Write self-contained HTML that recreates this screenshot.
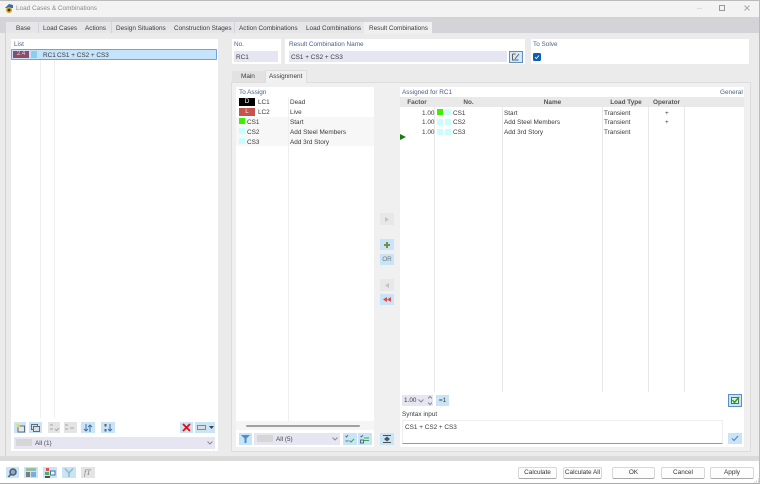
<!DOCTYPE html>
<html><head><meta charset="utf-8"><style>
html,body{margin:0;padding:0;width:760px;height:484px;overflow:hidden;background:#fff}
body{position:relative;font-family:"Liberation Sans",sans-serif;font-size:6.4px;color:#3a3a3a}
div{position:absolute;box-sizing:border-box}
.t{white-space:nowrap;line-height:9px;height:9px}
.b{color:#4a5f8a}
.w{background:#fff}
.i{background:#c9e3f7}
.g{background:#e4e4e4}
.f{background:#e6e6f2}
.v{width:1px;background:#efefef}
.btn{background:#fdfdfd;border:1px solid #d8d8d8;border-bottom:1px solid #aaa;border-radius:2px;height:12px;top:467px;text-align:center;line-height:10px;color:#333;white-space:nowrap}
.hd{top:97.500px;height:9px;text-align:center;line-height:9px;font-weight:bold;color:#555;white-space:nowrap}
svg{position:absolute;opacity:.82}
</style></head><body>
<div style="left:0;top:0;width:760px;height:17px;background:#f3f3f3;border-top:1px solid #bbb"></div>
<div style="left:0;top:17px;width:760px;height:16px;background:#d4d4d8"></div>
<div style="left:0;top:33px;width:760px;height:428px;background:#ebebeb"></div>
<div style="left:0;top:456px;width:760px;height:5px;background:#dadada"></div>
<div style="left:0;top:461px;width:760px;height:22px;background:#fff"></div>
<div style="left:0;top:483px;width:760px;height:1px;background:#aaa"></div>
<div style="left:759px;top:0;width:1px;height:484px;background:#bbb"></div>
<div style="left:5px;top:33px;width:1px;height:423px;background:#d2d2d2"></div>

<svg style="left:4px;top:3px;opacity:1" width="11" height="11" viewBox="0 0 11 11"><path d="M1 5 L5 1 L9 2 L9 5 Z" fill="#3a6ea5"/><circle cx="5" cy="7" r="3" fill="#d9a520"/><circle cx="5" cy="7" r="1.400" fill="#333"/></svg>
<div class="t" style="left:16px;top:4px;color:#8a8a8a">Load Cases &amp; Combinations</div>
<div style="left:697px;top:8px;width:5px;height:1px;background:#ddd"></div>
<div style="left:719px;top:5px;width:6px;height:6px;border:1px solid #999"></div>
<svg style="left:744px;top:5px" width="6" height="6"><path d="M.5 .5L5.500 5.500M5.500 .5L.5 5.500" stroke="#999" fill="none"/></svg>

<div style="left:6px;top:22px;width:32px;height:11px;background:#e6e6e8"></div>
<div style="left:38.500px;top:22px;width:40px;height:11px;background:#e6e6e8"></div>
<div style="left:79px;top:22px;width:32px;height:11px;background:#e6e6e8"></div>
<div style="left:111.500px;top:22px;width:58px;height:11px;background:#e6e6e8"></div>
<div style="left:170px;top:22px;width:64px;height:11px;background:#e6e6e8"></div>
<div style="left:234.500px;top:22px;width:67px;height:11px;background:#e6e6e8"></div>
<div style="left:302px;top:22px;width:62px;height:11px;background:#e6e6e8"></div>
<div style="left:364px;top:22px;width:68px;height:12px;background:#f0f0f0"></div>
<div class="t" style="left:16px;top:24px">Base</div>
<div class="t" style="left:43px;top:24px">Load Cases</div>
<div class="t" style="left:85px;top:24px">Actions</div>
<div class="t" style="left:116px;top:24px">Design Situations</div>
<div class="t" style="left:174px;top:24px">Construction Stages</div>
<div class="t" style="left:239px;top:24px">Action Combinations</div>
<div class="t" style="left:306px;top:24px">Load Combinations</div>
<div class="t" style="left:369px;top:24px">Result Combinations</div>

<!-- list -->
<div class="w" style="left:11px;top:39px;width:207px;height:412px"></div>
<div class="t b" style="left:14px;top:40px">List</div>
<div class="v" style="left:40px;top:49px;height:369px"></div>
<div class="v" style="left:54px;top:49px;height:369px"></div>
<div style="left:11px;top:49px;width:206px;height:11px;background:#c5e3fa;border:1px solid #6fa4d8;border-radius:1px"></div>
<div style="left:13px;top:51px;width:16px;height:7px;background:#8e4a68;color:#ddd;font-size:6px;line-height:7px;text-align:center">2.4</div>
<div style="left:31px;top:51px;width:6px;height:7px;background:#88d0ee"></div>
<div class="t" style="left:43px;top:50.500px">RC1</div>
<div class="t" style="left:57px;top:50.500px">CS1 + CS2 + CS3</div>

<div class="i" style="left:14px;top:422px;width:12px;height:11px"></div>
<svg style="left:15px;top:423px" width="11" height="10"><rect x="3" y="3" width="6.500" height="6" fill="#e8e8e8" stroke="#456" stroke-width="1"/><circle cx="3" cy="2.500" r="1.800" fill="#f2d840"/></svg>
<div class="i" style="left:29px;top:422px;width:13px;height:11px"></div>
<svg style="left:30px;top:423px" width="11" height="10"><rect x="1.500" y="1.500" width="6" height="5" fill="#ddd" stroke="#456"/><rect x="3.500" y="3.500" width="6" height="5" fill="#ddd" stroke="#456"/></svg>
<div class="g" style="left:48px;top:422px;width:12px;height:11px"></div>
<div class="g" style="left:64px;top:422px;width:13px;height:11px"></div>
<svg style="left:49px;top:423px" width="28" height="10"><path d="M1 2h3M1 6h3M6 6l1.500 1.500L10 5M16 2h3M16 6h3M21 5h4" stroke="#999" fill="none"/></svg>
<div class="i" style="left:81px;top:422px;width:14px;height:11px"></div>
<svg style="left:83px;top:423px" width="10" height="10"><path d="M3 1v7M1 6l2 2 2-2M7 9V2M5 4l2-2 2 2" stroke="#25598f" fill="none"/></svg>
<div class="i" style="left:101px;top:422px;width:14px;height:11px"></div>
<svg style="left:103px;top:423px" width="10" height="10"><path d="M7 1v7M5 6l2 2 2-2" stroke="#25598f" fill="none"/><rect x="1.500" y="1" width="2" height="2.500" fill="#444"/><rect x="1.500" y="6" width="2" height="2.500" fill="#25598f"/></svg>
<div class="i" style="left:180px;top:422px;width:13px;height:11px"></div>
<svg style="left:182px;top:423px;opacity:1" width="9" height="9"><path d="M1 1L8 8M8 1L1 8" stroke="#e01010" stroke-width="1.800"/></svg>
<div class="i" style="left:195px;top:422px;width:20px;height:11px"></div>
<div style="left:197px;top:425px;width:9px;height:5px;background:#ddd;border:1px solid #888"></div>
<svg style="left:209px;top:426px" width="5" height="3"><path d="M0 0H5L2.500 3Z" fill="#222"/></svg>
<div class="f" style="left:14px;top:437px;width:201px;height:12px"></div>
<div style="left:16px;top:439px;width:16px;height:7px;background:#d6d6d6"></div>
<div class="t" style="left:35px;top:439px;color:#444">All (1)</div>
<svg style="left:207px;top:441px" width="6" height="4"><path d="M.5 .5L3 3 5.500 .5" stroke="#777" fill="none"/></svg>

<!-- top boxes -->
<div class="w" style="left:232px;top:39px;width:49px;height:25px"></div>
<div class="t b" style="left:234px;top:40px">No.</div>
<div class="f" style="left:234px;top:51px;width:44px;height:11px"></div>
<div class="t" style="left:236px;top:53px">RC1</div>
<div class="w" style="left:285px;top:39px;width:240px;height:25px"></div>
<div class="t b" style="left:289px;top:40px">Result Combination Name</div>
<div class="f" style="left:289px;top:51px;width:218px;height:11px"></div>
<div class="t" style="left:291px;top:53px">CS1 + CS2 + CS3</div>
<div style="left:509px;top:51px;width:14px;height:12px;background:#d5e8f7;border:1px solid #5b8fc0"></div>
<svg style="left:511px;top:52px" width="10" height="10"><path d="M1.500 2h3M1.500 2v6h6M4 7L8 2" stroke="#444" fill="none"/></svg>
<div class="w" style="left:531px;top:39px;width:218px;height:25px"></div>
<div class="t b" style="left:533px;top:40px">To Solve</div>
<div style="left:533px;top:53px;width:8px;height:8px;background:#0d5cb8;border-radius:1.500px"></div>
<svg style="left:533px;top:53px;opacity:1" width="8" height="8"><path d="M2 4.200L3.400 5.500 6 2.500" stroke="#fff" fill="none" stroke-width=".8"/></svg>

<!-- sub tabs -->
<div style="left:232px;top:71px;width:33px;height:11px;background:#e2e2e2"></div>
<div style="left:265px;top:70px;width:42px;height:13px;background:#f1f1f1;border:1px solid #ddd;border-bottom:0"></div>
<div class="t" style="left:241px;top:72px">Main</div>
<div class="t" style="left:269px;top:72px">Assignment</div>
<div style="left:231px;top:82px;width:520px;height:370px;background:#f0f0f0;border:1px solid #ddd"></div>
<div style="left:266px;top:82px;width:40px;height:1px;background:#f1f1f1"></div>

<!-- to assign -->
<div class="w" style="left:236px;top:87px;width:138px;height:360px"></div>
<div class="t b" style="left:239px;top:88px">To Assign</div>
<div style="left:236px;top:117px;width:138px;height:29px;background:#f7f7f7"></div>
<div class="v" style="left:288px;top:97px;height:324px"></div>
<div style="left:239px;top:98px;width:16px;height:8px;background:#000;color:#fff;text-align:center;line-height:8px">D</div>
<div style="left:239px;top:108px;width:16px;height:8px;background:#c8524e;color:#eee;text-align:center;line-height:8px">L</div>
<div style="left:239px;top:118px;width:6px;height:6px;background:#3cf000"></div>
<div style="left:239px;top:128px;width:6px;height:6px;background:#c8feff"></div>
<div style="left:239px;top:138px;width:6px;height:6px;background:#c8feff"></div>
<div class="t" style="left:258px;top:98px">LC1</div><div class="t" style="left:290px;top:98px">Dead</div>
<div class="t" style="left:258px;top:108px">LC2</div><div class="t" style="left:290px;top:108px">Live</div>
<div class="t" style="left:247px;top:117.500px">CS1</div><div class="t" style="left:290px;top:117.500px">Start</div>
<div class="t" style="left:247px;top:127.500px">CS2</div><div class="t" style="left:290px;top:127.500px">Add Steel Members</div>
<div class="t" style="left:247px;top:137.500px">CS3</div><div class="t" style="left:290px;top:137.500px">Add 3rd Story</div>
<div style="left:236px;top:421px;width:138px;height:9px;background:#f5f5f5"></div>
<div style="left:246px;top:425px;width:114px;height:2px;background:#a0a0a0;border-radius:1px"></div>
<div class="i" style="left:239px;top:433px;width:13px;height:12px"></div>
<svg style="left:241px;top:435px" width="9" height="8"><path d="M0 0H9L5.500 3.500V8H3.500V3.500Z" fill="#2d7fc4"/></svg>
<div class="f" style="left:254px;top:433px;width:86px;height:12px"></div>
<div style="left:257px;top:435px;width:16px;height:7px;background:#d6d6d6"></div>
<div class="t" style="left:276px;top:435px;color:#444">All (5)</div>
<svg style="left:332px;top:437px" width="6" height="4"><path d="M.5 .5L3 3 5.500 .5" stroke="#777" fill="none"/></svg>
<div class="i" style="left:343px;top:433px;width:14px;height:12px"></div>
<svg style="left:345px;top:434px" width="10" height="10"><path d="M.5 2l1 1 1.500-2M.5 7h3" stroke="#456" fill="none"/><path d="M4.500 6.500l1.500 1.500L9 5" stroke="#1a9a30" fill="none"/></svg>
<div class="i" style="left:358px;top:433px;width:14px;height:12px"></div>
<svg style="left:360px;top:434px" width="10" height="10"><path d="M.5 2l1 1 1.500-2M.5 6h3v3h-3z" stroke="#456" fill="none"/><path d="M4 4h5M4 6.500h5" stroke="#1a9a30" fill="none"/></svg>

<!-- middle -->
<div style="left:380px;top:213px;width:14px;height:12px;background:#e8e8e8"></div>
<svg style="left:385px;top:217px" width="4" height="5"><path d="M0 0L4 2.500 0 5Z" fill="#bbb"/></svg>
<div class="i" style="left:380px;top:239px;width:14px;height:11px"></div>
<svg style="left:384px;top:242px" width="6" height="6"><path d="M3 0V6M0 3H6" stroke="#6a7a20" stroke-width="2"/></svg>
<div class="i" style="left:380px;top:254px;width:14px;height:11px;text-align:center;line-height:11px;color:#777">OR</div>
<div style="left:380px;top:279px;width:14px;height:12px;background:#e8e8e8"></div>
<svg style="left:385px;top:283px" width="4" height="5"><path d="M4 0L0 2.500 4 5Z" fill="#bbb"/></svg>
<div class="i" style="left:380px;top:294px;width:14px;height:11px"></div>
<svg style="left:383px;top:297px" width="8" height="5"><path d="M4 0L0 2.500 4 5ZM8 0L4 2.500 8 5Z" fill="#e02a2a"/></svg>
<div class="i" style="left:380px;top:433px;width:14px;height:12px"></div>
<svg style="left:382px;top:435px" width="10" height="8"><path d="M1 .5H9M1 7.500H9" stroke="#333"/><path d="M5 1.500L8 4H2ZM5 6.500L8 4H2Z" fill="#333"/></svg>

<!-- assigned -->
<div class="w" style="left:400px;top:87px;width:344px;height:360px"></div>
<div class="t b" style="left:402px;top:88px">Assigned for RC1</div>
<div class="t b" style="left:720px;top:88px">General</div>
<div style="left:400px;top:97px;width:344px;height:10px;background:#e9e9e9"></div>
<div class="hd" style="left:404px;width:26px">Factor</div>
<div class="hd" style="left:435px;width:67px">No.</div>
<div class="hd" style="left:503px;width:99px">Name</div>
<div class="hd" style="left:603px;width:46px">Load Type</div>
<div class="hd" style="left:649px;width:35px">Operator</div>
<div class="v" style="left:434px;top:97px;height:295px;background:#e8e8e8"></div>
<div class="v" style="left:502px;top:97px;height:295px;background:#e8e8e8"></div>
<div class="v" style="left:602px;top:97px;height:295px;background:#e8e8e8"></div>
<div class="v" style="left:648px;top:97px;height:295px;background:#e8e8e8"></div>
<div class="v" style="left:684px;top:97px;height:295px;background:#e8e8e8"></div>

<div class="t" style="left:422px;top:108.500px">1.00</div>
<div style="left:436.500px;top:109px;width:6px;height:6px;background:#3cf000"></div>
<div style="left:444.500px;top:109px;width:6px;height:6px;background:#c8feff"></div>
<div class="t" style="left:453px;top:108.500px">CS1</div><div class="t" style="left:504px;top:108.500px">Start</div><div class="t" style="left:604px;top:108.500px">Transient</div><div class="t" style="left:665px;top:108.500px">+</div>
<div class="t" style="left:422px;top:118px">1.00</div>
<div style="left:436.500px;top:119px;width:6px;height:6px;background:#c8feff"></div>
<div style="left:444.500px;top:119px;width:6px;height:6px;background:#c8feff"></div>
<div class="t" style="left:453px;top:118px">CS2</div><div class="t" style="left:504px;top:118px">Add Steel Members</div><div class="t" style="left:604px;top:118px">Transient</div><div class="t" style="left:665px;top:118px">+</div>
<div class="t" style="left:422px;top:128px">1.00</div>
<div style="left:436.500px;top:129px;width:6px;height:6px;background:#c8feff"></div>
<div style="left:444.500px;top:129px;width:6px;height:6px;background:#c8feff"></div>
<div class="t" style="left:453px;top:128px">CS3</div><div class="t" style="left:504px;top:128px">Add 3rd Story</div><div class="t" style="left:604px;top:128px">Transient</div>
<svg style="left:400px;top:134px;opacity:1" width="6" height="6"><path d="M0 0L6 3 0 6Z" fill="#1a7a10"/></svg>

<div class="f" style="left:402px;top:395px;width:31px;height:11px"></div>
<div class="t" style="left:404px;top:396px">1.00</div>
<svg style="left:418px;top:399px" width="6" height="4"><path d="M.5 .5L3 3 5.500 .5" stroke="#777" fill="none"/></svg>
<svg style="left:428px;top:396px" width="4" height="9"><path d="M0 2.500L2 .5 4 2.500M0 6.500L2 8.500 4 6.500" stroke="#555" fill="none" stroke-width=".8"/></svg>
<div class="i" style="left:436px;top:395px;width:13px;height:11px;text-align:center;line-height:11px">=1</div>
<div style="left:728px;top:394px;width:14px;height:13px;background:#c9e3f7;border:1px solid #5b8fc0"></div>
<div style="left:731px;top:397px;width:8px;height:7px;background:#d8f5d0;border:1px solid #666"></div>
<svg style="left:731px;top:396px;opacity:1" width="9" height="8"><path d="M1.500 4L3.500 6.500 8 1" stroke="#1aa030" fill="none" stroke-width="1.400"/></svg>
<div class="t" style="left:402px;top:410px">Syntax input</div>
<div style="left:402px;top:420px;width:321px;height:24px;background:#fff;border:1px solid #eee;border-bottom:1px solid #999"></div>
<div class="t" style="left:405px;top:423px">CS1 + CS2 + CS3</div>
<div class="i" style="left:728px;top:433px;width:14px;height:11px"></div>
<svg style="left:731px;top:435px" width="8" height="7"><path d="M1 3.500L3 5.500 7 1" stroke="#3a70b0" fill="none" stroke-width="1.100"/></svg>

<!-- bottom -->
<div class="i" style="left:6px;top:467px;width:13px;height:11px"></div>
<svg style="left:7px;top:468px" width="11" height="10"><circle cx="6" cy="4" r="3" fill="#999" stroke="#24406a" stroke-width="1.500"/><path d="M4 6L1.500 9" stroke="#24406a" stroke-width="1.500"/></svg>
<div class="i" style="left:24px;top:467px;width:14px;height:11px"></div>
<svg style="left:26px;top:468px" width="11" height="9"><rect width="10" height="3" fill="#8ab88a"/><rect y="4" x="0" width="4" height="5" fill="#666"/><rect y="4" x="5" width="5" height="5" fill="#6a9fe0"/></svg>
<div class="i" style="left:43px;top:467px;width:14px;height:11px"></div>
<svg style="left:45px;top:468px" width="11" height="10"><rect x="1" width="3" height="3" fill="#e03030"/><rect x="0" y="4" width="4" height="3" fill="#40a040"/><rect y="8" width="5" height="2" fill="#333"/><rect x="5.500" y="3" width="4.500" height="4" fill="#fff" stroke="#25598f"/></svg>
<div class="i" style="left:62px;top:467px;width:14px;height:11px"></div>
<svg style="left:64px;top:468px" width="10" height="9"><path d="M1 .5L5 5 9 .5M5 5V9" stroke="#8ab0b8" stroke-width="1.500" fill="none"/></svg>
<div class="g" style="left:81px;top:467px;width:14px;height:11px"></div>
<div style="left:84px;top:468px;color:#888;font:italic 8px 'Liberation Serif',serif;line-height:10px;white-space:nowrap">fT</div>

<div class="btn" style="left:518px;width:39px">Calculate</div>
<div class="btn" style="left:563px;width:39px">Calculate All</div>
<div class="btn" style="left:612px;width:43px">OK</div>
<div class="btn" style="left:661px;width:44px">Cancel</div>
<div class="btn" style="left:710px;width:44px">Apply</div>
<svg style="left:754px;top:478px" width="5" height="5"><path d="M4.500 .5V1.500M2.500 2.500V3.500M4.500 2.500V3.500M.5 3.500V4.500M2.500 3.500V4.500M4.500 3.500V4.500" stroke="#bbb" fill="none"/></svg>
</body></html>
